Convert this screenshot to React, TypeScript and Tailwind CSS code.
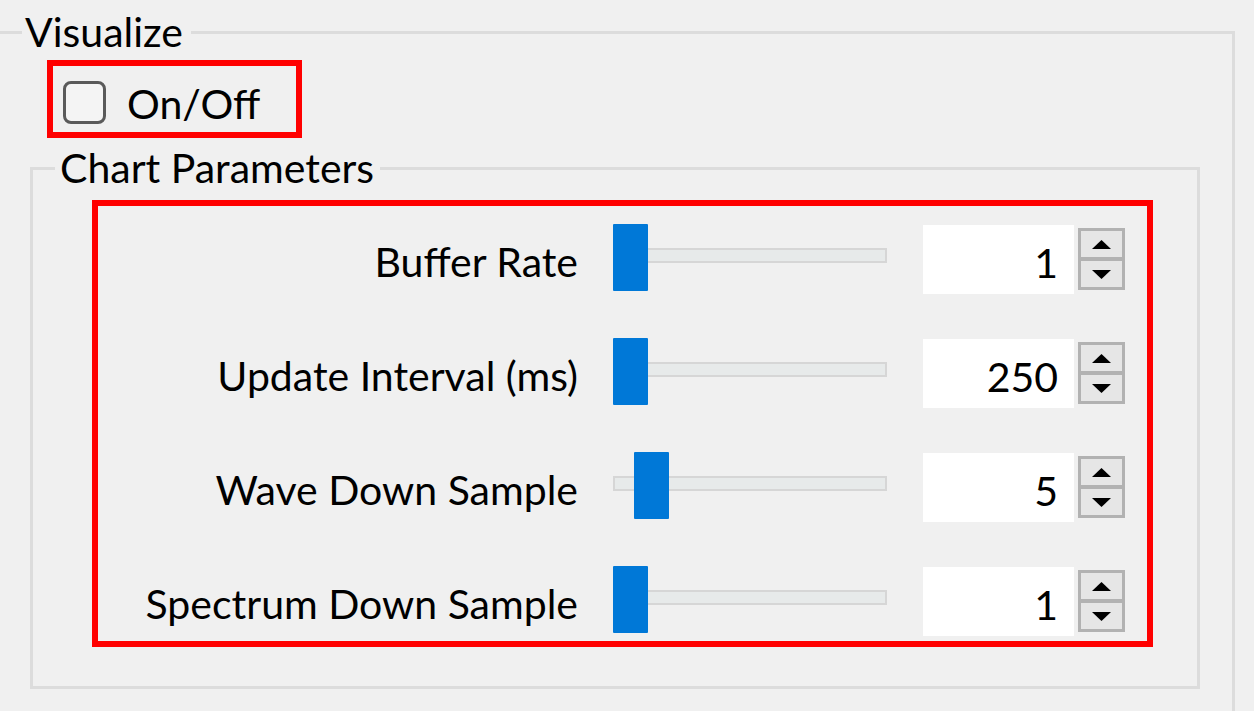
import React from "react";

const font = { fontFamily: "Lato, 'Noto Sans', sans-serif" };

function Spinner() {
  return (
    <div className="flex flex-col w-[47px] mt-[4px]">
      <div className="h-[32px] border-[3px] border-[#b2b2b2] bg-[#e6e6e6] flex items-center justify-center">
        <svg width="19" height="9" viewBox="0 0 19 9">
          <polygon points="9.5,0 19,9 0,9" fill="#000" />
        </svg>
      </div>
      <div className="h-[32px] -mt-[2px] border-[3px] border-[#b2b2b2] bg-[#e6e6e6] flex items-center justify-center">
        <svg width="19" height="9" viewBox="0 0 19 9">
          <polygon points="0,0 19,0 9.5,9" fill="#000" />
        </svg>
      </div>
    </div>
  );
}

function Row({ label, value, offset }: { label: string; value: string; offset: number }) {
  return (
    <div className="flex h-[68px] items-start">
      <div className="w-[480px] h-[68px] flex items-center justify-end pt-[6px] text-[41px] leading-none text-black">
        {label}
      </div>
      <div className="relative ml-[35px] w-[274px] h-[68px]">
        <div className="mt-[24px] h-[15px] border-2 border-[#d6d6d6] bg-[#e7eaea]" />
        <div
          className="absolute top-0 w-[35px] h-[67px] bg-[#0078d7] rounded-[1px]"
          style={{ left: offset }}
        />
      </div>
      <div className="ml-[36px] w-[151px] h-[69px] mt-[1px] bg-white flex items-center justify-end pr-[16px] pt-[6px] text-[41px] leading-none text-black">
        {value}
      </div>
      <div className="ml-[4px]">
        <Spinner />
      </div>
    </div>
  );
}

export default function App() {
  return (
    <div className="w-[1254px] h-[711px] overflow-hidden bg-[#f0f0f0] pt-[10px]" style={font}>
      <fieldset className="-ml-[8px] w-[1243px] h-[760px] border-[3px] border-[#dcdcdc] p-0 m-0">
        <legend className="ml-[27px] pl-[3px] pr-[8px] text-[41px] leading-[44px] text-black">Visualize</legend>
        <div className="ml-[52px] mt-[6px] w-[255px] h-[78px] border-[6px] border-[#ff0000] flex items-center pl-[10px] pt-[6px]">
          <div className="w-[43px] h-[43px] rounded-[8px] border-[3px] border-[#5a5a5a] bg-[#f4f4f4]" />
          <span className="ml-[21px] text-[41px] leading-none text-black pt-[2px]">On/Off</span>
        </div>
        <fieldset className="ml-[35px] mt-[8px] w-[1170px] border-[3px] border-[#dcdcdc] p-0 m-0">
          <legend className="ml-[22px] pl-[5px] pr-[6px] text-[41px] leading-[44px] text-black">Chart Parameters</legend>
          <div className="ml-[59px] mt-[10px] mb-[39px] w-[1061px] h-[447px] border-[6px] border-[#ff0000] pt-[18px] flex flex-col gap-[46px]">
            <Row label="Buffer Rate" value="1" offset={0} />
            <Row label="Update Interval (ms)" value="250" offset={0} />
            <Row label="Wave Down Sample" value="5" offset={21} />
            <Row label="Spectrum Down Sample" value="1" offset={0} />
          </div>
        </fieldset>
      </fieldset>
    </div>
  );
}
